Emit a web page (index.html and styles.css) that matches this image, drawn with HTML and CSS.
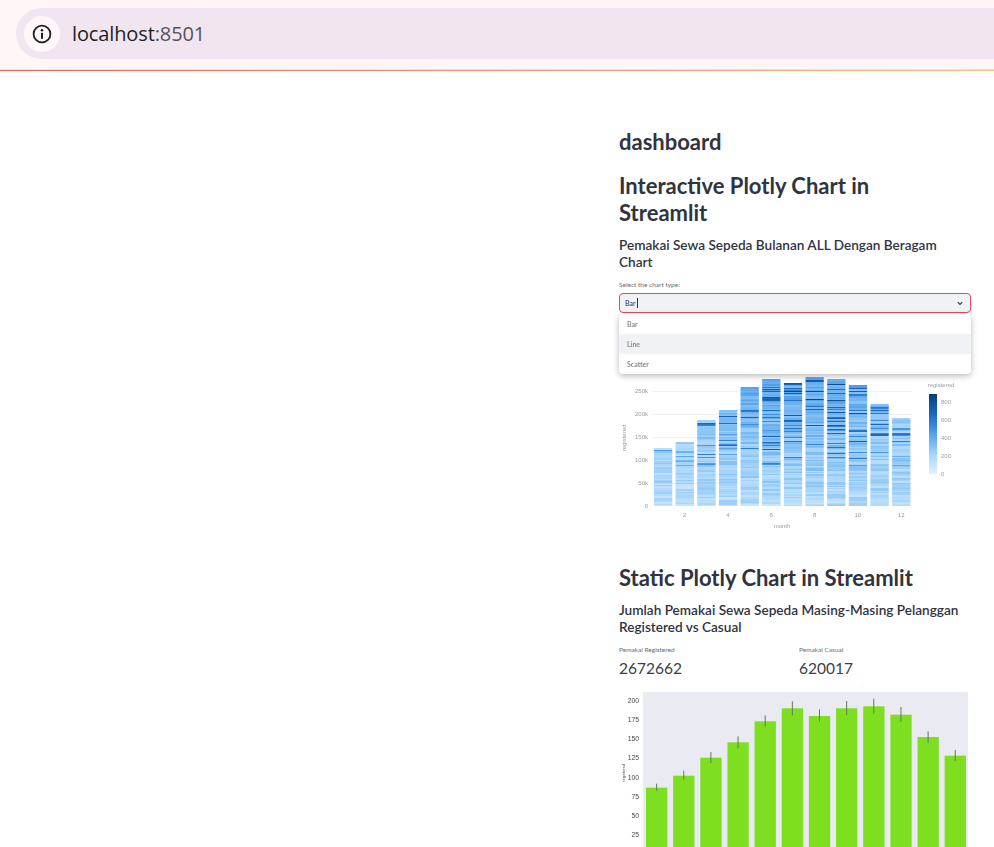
FILE: index.html
```html
<!DOCTYPE html>
<html>

<head>
  <title>dashboard</title>
  <link rel="stylesheet" href="styles.css">
</head>

<body>

  <div class="browser-bar">
    <div class="address">
      <span class="site-icon">
        <svg width="20" height="20" viewBox="0 0 20 20">
          <circle cx="10" cy="10" r="8.4" fill="none" stroke="#1f1f1f" stroke-width="1.8" />
          <rect x="9" y="8.8" width="2" height="6" fill="#1f1f1f" />
          <circle cx="10" cy="6.3" r="1.25" fill="#1f1f1f" />
        </svg>
      </span>
      <span class="host">localhost</span><span class="port">:8501</span>
    </div>
  </div>
  <div class="decoration"></div>

  <div class="app">
    <div class="block">
      <h2 class="title">dashboard</h2>
      <h2 class="heading">Interactive Plotly Chart in Streamlit</h2>
      <h4 class="sub">Pemakai Sewa Sepeda Bulanan ALL Dengan Beragam Chart</h4>

      <div class="select-wrap">
        <label class="small-label">Select the chart type:</label>
        <div class="select">
          <span class="select-value">Bar</span><span class="caret"></span>
          <svg class="chevron" width="6" height="5" viewBox="0 0 6 5">
            <path d="M0.8 1.2 L3 3.4 L5.2 1.2" fill="none" stroke="#31333f" stroke-width="1.1" />
          </svg>
        </div>
        <ul class="menu">
          <li><span>Bar</span></li>
          <li class="active"><span>Line</span></li>
          <li><span>Scatter</span></li>
        </ul>
      </div>

      <svg id="heat-chart" class="heat-chart" width="352" height="210" viewBox="0 0 352 210"></svg>

      <h2 class="heading static-heading">Static Plotly Chart in Streamlit</h2>
      <h4 class="sub">Jumlah Pemakai Sewa Sepeda Masing-Masing Pelanggan Registered vs Casual</h4>

      <div class="metrics">
        <div class="metric">
          <div class="small-label">Pemakai Registered</div>
          <div class="metric-value">2672662</div>
        </div>
        <div class="metric">
          <div class="small-label">Pemakai Casual</div>
          <div class="metric-value">620017</div>
        </div>
      </div>

      <svg id="green-chart" class="green-chart" width="352" height="190" viewBox="0 0 352 190"></svg>
    </div>
  </div>

  <script src="charts.js"></script>

</body>

</html>
```

FILE: styles.css
```css
* {
  box-sizing: border-box;
}

html,
body {
  height: 100%;
  margin: 0;
}

body {
  display: flex;
  flex-direction: column;
  overflow: hidden;
  background-color: white;
  color: #31333f;
  font-family: "Lato", "Liberation Sans", sans-serif;
}

.browser-bar {
  height: 70px;
  padding: 8px 0 11px 16px;
  background-color: #fff7f7;
  border-bottom: 1px solid #e8e2e4;
}

.address {
  display: flex;
  align-items: center;
  height: 51px;
  padding-left: 8px;
  border-radius: 26px 0 0 26px;
  background-color: #f1e5ef;
  font-family: "Open Sans", sans-serif;
  font-size: 20px;
  letter-spacing: -0.12px;
}

.site-icon {
  display: flex;
  align-items: center;
  justify-content: center;
  width: 36px;
  height: 36px;
  margin-right: 12px;
  border-radius: 50%;
  background-color: #fff7f9;
}

.host {
  color: #1f1f1f;
}

.port {
  color: #55535a;
}

.decoration {
  flex: none;
  height: 1px;
  background: linear-gradient(90deg, #e8685f, #eea77f 70%, #efc489);
}

.app {
  flex: 1;
  min-height: 0;
  padding: 58px 23px 0 619px;
  overflow: hidden;
}

.block {
  width: 352px;
}

h2,
h4 {
  margin: 0;
}

.title {
  font-size: 22px;
  line-height: 26px;
  font-weight: 700;
}

.heading {
  max-width: 338px;
  margin-top: 17px;
  font-size: 22px;
  line-height: 27px;
  font-weight: 700;
}

.sub {
  max-width: 345px;
  margin-top: 11px;
  font-size: 13.6px;
  line-height: 17px;
  font-weight: 600;
}

.select-wrap {
  position: relative;
  margin-top: 9px;
}

.small-label {
  display: block;
  font-size: 6.5px;
  line-height: 9px;
  color: #6a6c74;
}

.select {
  display: flex;
  align-items: center;
  height: 20px;
  margin-top: 4px;
  padding: 0 7px 0 5px;
  border: 1px solid #e2495a;
  border-radius: 4px;
  background-color: #f0f2f6;
  font-size: 7px;
}

.caret {
  width: 1px;
  height: 10px;
  margin-left: 1px;
  background-color: #31333f;
}

.chevron {
  margin-left: auto;
}

.menu {
  position: absolute;
  top: 34px;
  left: 0;
  width: 352px;
  margin: 0;
  padding: 0;
  border-radius: 4px;
  background-color: white;
  box-shadow: 0 2px 6px rgba(0, 0, 0, 0.28);
  list-style: none;
  font-size: 7px;
  font-weight: 700;
  color: #8b8c92;
}

.menu li {
  height: 20px;
  padding-left: 8px;
  line-height: 20px;
}

.menu li span {
  display: inline-block;
  filter: blur(0.5px);
}

.menu li.active {
  background-color: #f0f2f6;
}

.heat-chart {
  display: block;
  margin-top: 13px;
  filter: blur(0.35px);
}

.static-heading {
  margin-top: 28px;
  max-width: none;
}

.metrics {
  display: flex;
  margin-top: 9px;
}

.metric {
  flex: none;
  width: 180px;
}

.metric-value {
  margin-top: 3px;
  font-size: 15.5px;
  line-height: 22px;
  color: #3a3c47;
}

.green-chart {
  display: block;
  margin-top: 13px;
  filter: blur(0.35px);
}

.axis-text {
  font-family: "Liberation Sans", sans-serif;
  font-size: 6px;
  fill: #9a9ca5;
}

.green-text {
  font-family: "Liberation Sans", sans-serif;
  font-size: 6.8px;
  fill: #4a4a4a;
}
```

FILE: charts.js
```js
const SVG_NS = "http://www.w3.org/2000/svg";

function add(svg, tag, attrs, text) {
  const el = document.createElementNS(SVG_NS, tag);
  for (const key in attrs) {
    el.setAttribute(key, attrs[key]);
  }
  if (text !== undefined) {
    el.textContent = text;
  }
  svg.appendChild(el);
  return el;
}

// small seeded generator so the stripes come out the same every time
let seed = 12345;
function rnd() {
  seed = (seed * 1664525 + 1013904223) % 4294967296;
  return seed / 4294967296;
}

const stops = [
  [0, [226, 242, 255]],
  [0.25, [166, 212, 250]],
  [0.5, [84, 163, 235]],
  [0.75, [24, 104, 190]],
  [1, [9, 62, 124]]
];

function blue(v) {
  v = Math.min(1, Math.max(0, v));
  for (let i = 1; i < stops.length; i++) {
    if (v <= stops[i][0]) {
      const t = (v - stops[i - 1][0]) / (stops[i][0] - stops[i - 1][0]);
      const c = stops[i - 1][1].map((a, n) => Math.round(a + (stops[i][1][n] - a) * t));
      return `rgb(${c[0]},${c[1]},${c[2]})`;
    }
  }
  return "rgb(9,62,124)";
}

function drawHeatChart() {
  const svg = document.getElementById("heat-chart");
  // the svg starts at page x 619, y 326
  const ox = 619;
  const oy = 326;
  const base = 506 - oy;
  const tops = [449, 442.7, 420.7, 410, 388, 380, 383.3, 377, 379, 385, 405, 418];

  [391, 414, 437, 460, 483].forEach((y) => {
    add(svg, "rect", { x: 652 - ox, y: y - oy, width: 260, height: 1, fill: "#f0f1f4" });
  });

  ["250k", "200k", "150k", "100k", "50k", "0"].forEach((label, i) => {
    add(svg, "text", { class: "axis-text", x: 648 - ox, y: 393 + i * 23 - oy, "text-anchor": "end" }, label);
  });

  tops.forEach((top, i) => {
    const x = 654 + i * 21.65 - ox;
    const full = 506 - top;
    const strength = full / 129;
    let y = base;
    add(svg, "rect", { x: x, y: top - oy, width: 18.2, height: full, fill: "#d2eaff" });
    while (y > top - oy) {
      let h = 1 + Math.floor(rnd() * 1.8);
      const up = (base - y) / 129;
      let v = 0.1 + up * 0.3 * strength + rnd() * 0.18;
      if (up > 0.3 && rnd() < 0.24) {
        v += 0.22 * strength + rnd() * 0.24;
        h = 1;
      }
      add(svg, "rect", { x: x, y: y - h, width: 18.2, height: h, fill: blue(v) });
      y -= h;
    }
  });

  [2, 4, 6, 8, 10, 12].forEach((m) => {
    add(svg, "text", { class: "axis-text", x: 663 + (m - 1) * 21.65 - ox, y: 517 - oy, "text-anchor": "middle" }, m);
  });
  add(svg, "text", { class: "axis-text", x: 782 - ox, y: 528 - oy, "text-anchor": "middle" }, "month");
  add(svg, "text", {
    class: "axis-text",
    "text-anchor": "middle",
    transform: `translate(${626 - ox} ${438 - oy}) rotate(-90)`
  }, "registered");

  // colour bar
  add(svg, "text", { class: "axis-text", x: 941 - ox, y: 387 - oy, "text-anchor": "middle" }, "registered");
  for (let y = 394; y < 474; y++) {
    add(svg, "rect", { x: 929 - ox, y: y - oy, width: 8, height: 1, fill: blue((474 - y) / 80) });
  }
  [800, 600, 400, 200, 0].forEach((label, i) => {
    add(svg, "text", { class: "axis-text", x: 941 - ox, y: 404 + i * 18 - oy }, label);
  });
}

function drawGreenChart() {
  const svg = document.getElementById("green-chart");
  // the svg starts at page x 619, y 692
  const ox = 619;
  const oy = 692;
  const tops = [787.7, 775.7, 757.7, 742.3, 721.3, 708.3, 716, 708.3, 706.3, 714.7, 737, 755.7];
  const errors = [
    [296, 317], [257, 284], [201, 234], [154, 190], [91, 125], [49, 91],
    [73, 110], [48, 90], [41, 87], [66, 110], [139, 173], [195, 228]
  ];

  add(svg, "rect", { x: 643 - ox, y: 0, width: 325, height: 190, fill: "#eaeaf2" });

  tops.forEach((top, i) => {
    const x = 646 + i * 27.15 - ox;
    add(svg, "rect", { x: x, y: top - oy, width: 21.3, height: 880 - top, fill: "#7ddf1f" });
    add(svg, "rect", {
      x: x + 10.1,
      y: 685 + errors[i][0] / 3 - oy,
      width: 1,
      height: (errors[i][1] - errors[i][0]) / 3,
      fill: "#5f7a58"
    });
  });

  [200, 175, 150, 125, 100, 75, 50, 25].forEach((label, i) => {
    add(svg, "text", { class: "green-text", x: 639 - ox, y: 702.5 + i * 19.25 - oy, "text-anchor": "end" }, label);
  });

  add(svg, "text", {
    "font-family": "Liberation Sans, sans-serif",
    "font-size": "4",
    fill: "#4a4a4a",
    "text-anchor": "middle",
    transform: `translate(${624.5 - ox} ${773 - oy}) rotate(-90)`
  }, "registered");
}

drawHeatChart();
drawGreenChart();
```
